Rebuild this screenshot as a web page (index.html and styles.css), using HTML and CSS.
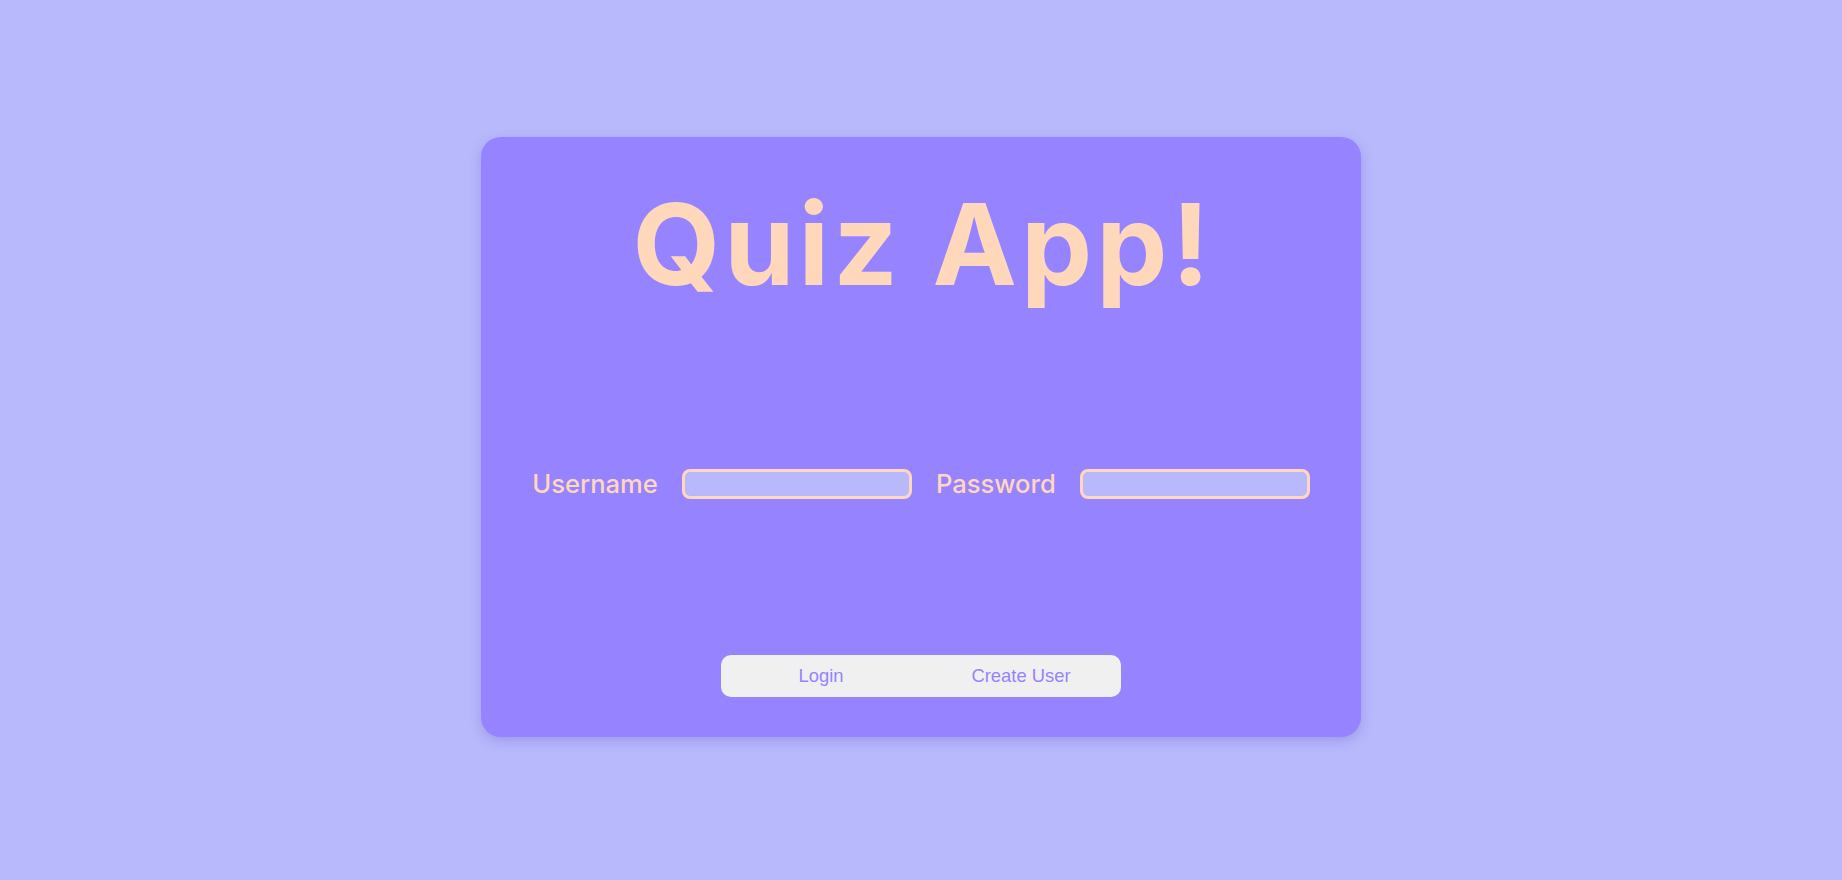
FILE: index.html
```html
<!DOCTYPE html>
<html lang="en">
<head>
<meta charset="utf-8">
<title>Quiz App</title>
<link rel="stylesheet" href="styles.css">
</head>
<body>
<main class="page">
  <section class="card">
    <h1 class="title">Quiz App!</h1>
    <form class="fields">
      <label class="label" for="username">Username</label>
      <input class="input" id="username" type="text">
      <label class="label" for="password">Password</label>
      <input class="input" id="password" type="password">
    </form>
    <div class="actions">
      <button class="btn" type="button">Login</button>
      <button class="btn" type="button">Create User</button>
    </div>
  </section>
</main>
</body>
</html>
```

FILE: styles.css
```css
* { box-sizing: border-box; }
html, body { margin: 0; padding: 0; }
body {
  background: #b8b8fc;
  font-family: Inter, "Noto Sans", sans-serif;
  height: 880px;
  overflow: hidden;
}
.page {
  height: 880px;
  display: flex;
  align-items: center;
  justify-content: center;
  padding-bottom: 6px;
}
.card {
  width: 880px;
  height: 600px;
  background: #9683ff;
  border-radius: 20px;
  box-shadow: 0 4px 12px rgba(80, 70, 180, 0.25);
  display: flex;
  flex-direction: column;
  align-items: center;
  padding: 40px 0;
}
.title {
  margin: 11px 0 0 4px;
  color: #ffd7ba;
  font-size: 113px;
  font-weight: 700;
  line-height: 1;
  letter-spacing: 4px;
}
.fields {
  margin-top: 167px;
  display: flex;
  align-items: center;
  gap: 24px;
}
.label {
  color: #ffd7ba;
  font-size: 25.6px;
  font-weight: 500;
}
.input {
  width: 230px;
  height: 30px;
  background: #b8b8fc;
  border: 3px solid #ffd7ba;
  border-radius: 8px;
  outline: none;
}
.actions {
  margin-top: auto;
  display: flex;
  background: #f0f0f0;
  border-radius: 10px;
  overflow: hidden;
}
.btn {
  width: 200px;
  height: 42px;
  border: none;
  background: transparent;
  color: #9683ff;
  font-family: "Liberation Sans", Arial, sans-serif;
  font-size: 18.4px;
  padding: 0;
}
```
